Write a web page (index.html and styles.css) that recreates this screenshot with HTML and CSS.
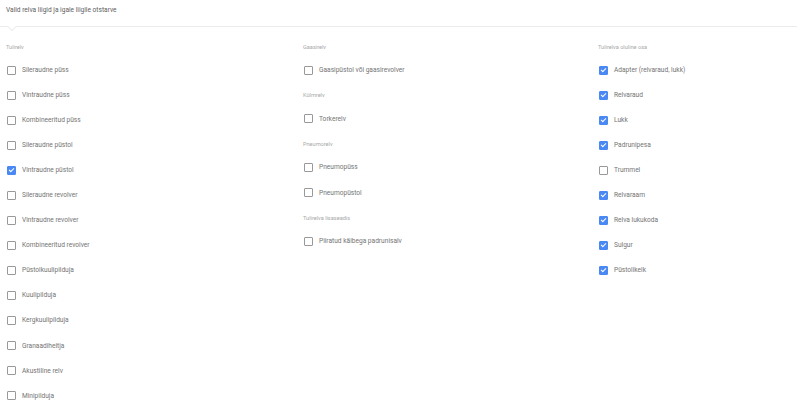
FILE: index.html
```html
<!DOCTYPE html>
<html lang="et">
<head>
<meta charset="utf-8">
<title>Relva liigid</title>
<link rel="stylesheet" href="styles.css">
</head>
<body>
<div class="top">
  <div class="title">Valid relva liigid ja igale liigile otstarve</div>
  <span class="notch"></span>
</div>
<div class="cols">
  <div class="col">
    <div class="group">
      <div class="heading">Tulirelv</div>
      <label class="row"><span class="box"></span><span class="txt">Sileraudne püss</span></label>
      <label class="row"><span class="box"></span><span class="txt">Vintraudne püss</span></label>
      <label class="row"><span class="box"></span><span class="txt">Kombineeritud püss</span></label>
      <label class="row"><span class="box"></span><span class="txt">Sileraudne püstol</span></label>
      <label class="row"><span class="box on"></span><span class="txt">Vintraudne püstol</span></label>
      <label class="row"><span class="box"></span><span class="txt">Sileraudne revolver</span></label>
      <label class="row"><span class="box"></span><span class="txt">Vintraudne revolver</span></label>
      <label class="row"><span class="box"></span><span class="txt">Kombineeritud revolver</span></label>
      <label class="row"><span class="box"></span><span class="txt">Püstolkuulipilduja</span></label>
      <label class="row"><span class="box"></span><span class="txt">Kuulipilduja</span></label>
      <label class="row"><span class="box"></span><span class="txt">Kergkuulipilduja</span></label>
      <label class="row"><span class="box"></span><span class="txt">Granaadiheitja</span></label>
      <label class="row"><span class="box"></span><span class="txt">Akustiline relv</span></label>
      <label class="row"><span class="box"></span><span class="txt">Minipilduja</span></label>
    </div>
  </div>
  <div class="col">
    <div class="group">
      <div class="heading">Gaasirelv</div>
      <label class="row"><span class="box"></span><span class="txt">Gaasipüstol või gaasirevolver</span></label>
    </div>
    <div class="group">
      <div class="heading">Külmrelv</div>
      <label class="row"><span class="box"></span><span class="txt">Torkerelv</span></label>
    </div>
    <div class="group">
      <div class="heading">Pneumorelv</div>
      <label class="row"><span class="box"></span><span class="txt">Pneumopüss</span></label>
      <label class="row"><span class="box"></span><span class="txt">Pneumopüstol</span></label>
    </div>
    <div class="group">
      <div class="heading">Tulirelva lisaseadis</div>
      <label class="row"><span class="box"></span><span class="txt">Piiratud käibega padrunisalv</span></label>
    </div>
  </div>
  <div class="col">
    <div class="group">
      <div class="heading">Tulirelva oluline osa</div>
      <label class="row"><span class="box on"></span><span class="txt">Adapter (relvaraud, lukk)</span></label>
      <label class="row"><span class="box on"></span><span class="txt">Relvaraud</span></label>
      <label class="row"><span class="box on"></span><span class="txt">Lukk</span></label>
      <label class="row"><span class="box on"></span><span class="txt">Padrunipesa</span></label>
      <label class="row"><span class="box"></span><span class="txt">Trummel</span></label>
      <label class="row"><span class="box on"></span><span class="txt">Relvaraam</span></label>
      <label class="row"><span class="box on"></span><span class="txt">Relva lukukoda</span></label>
      <label class="row"><span class="box on"></span><span class="txt">Sulgur</span></label>
      <label class="row"><span class="box on"></span><span class="txt">Püstolikelk</span></label>
    </div>
  </div>
</div>
</body>
</html>
```
FILE: styles.css
```css
html, body {
  margin: 0;
  padding: 0;
  background: #fff;
  font-family: Roboto, "Liberation Sans", sans-serif;
  overflow: hidden;
}
.top {
  position: relative;
  height: 27px;
  width: 797px;
  box-sizing: border-box;
  border-bottom: 1px solid #ececec;
  padding: 5px 0 0 6px;
}
.title {
  font-size: 6.6px;
  line-height: 10px;
  color: #5e5e5e;
}
.notch {
  position: absolute;
  left: 9px;
  bottom: -4px;
  width: 5px;
  height: 5px;
  background: #fff;
  border-right: 1px solid #ececec;
  border-bottom: 1px solid #ececec;
  transform: rotate(45deg);
}
.cols {
  display: grid;
  grid-template-columns: 297px 295px 1fr;
  padding: 14.5px 0 0 6px;
}
.group + .group {
  margin-top: 7.7px;
}
.heading {
  font-size: 5.6px;
  line-height: 10px;
  color: #a8a8a8;
  margin-bottom: 6px;
}
.row {
  display: flex;
  align-items: center;
  height: 25.05px;
}
.box {
  box-sizing: border-box;
  width: 9px;
  height: 9px;
  margin-left: 1px;
  border: 1px solid #999;
  border-radius: 1px;
  position: relative;
}
.box.on {
  background: #4a89f3;
  border-color: #4a89f3;
}
.box.on::after {
  content: "";
  position: absolute;
  left: 2.2px;
  top: 0.6px;
  width: 2px;
  height: 4px;
  border-right: 1px solid #fff;
  border-bottom: 1px solid #fff;
  transform: rotate(45deg);
}
.txt {
  margin-left: 6px;
  font-size: 6.6px;
  line-height: 10px;
  color: #747474;
}
```
